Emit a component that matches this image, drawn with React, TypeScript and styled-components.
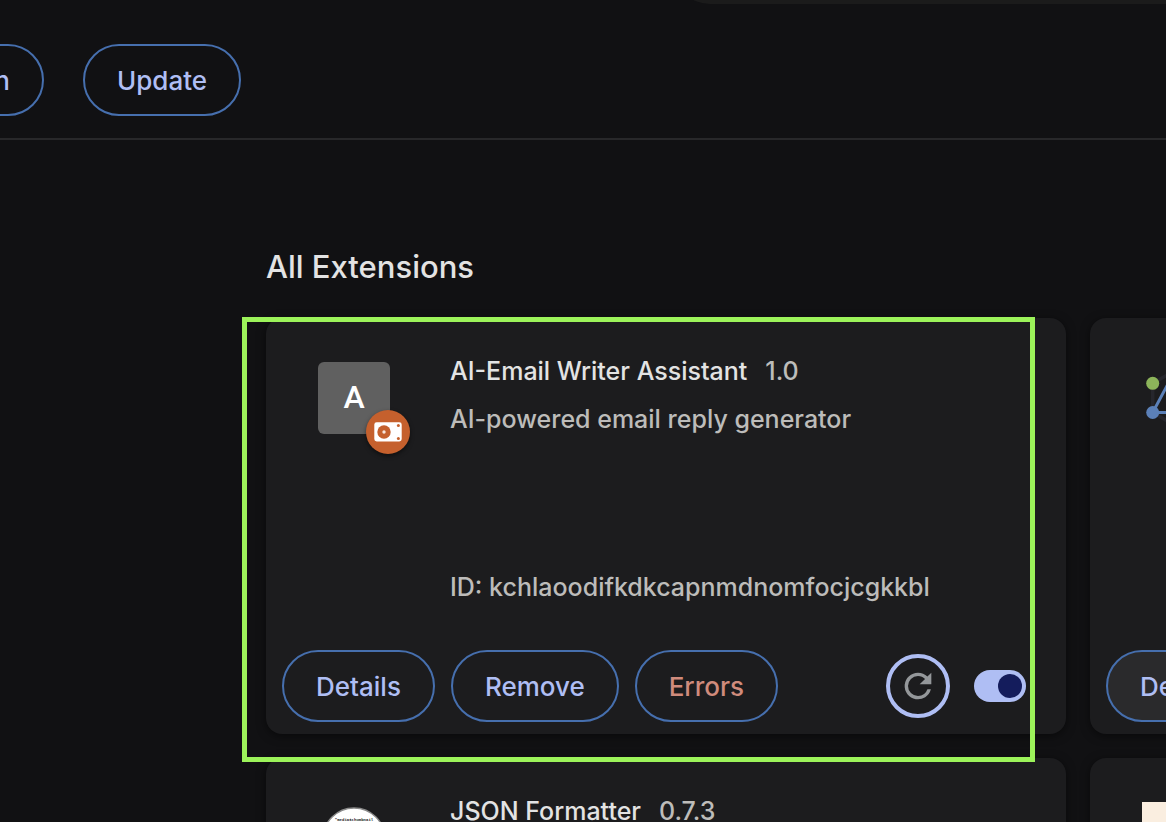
import React from "react";
import styled, { createGlobalStyle, css } from "styled-components";

const GlobalStyle = createGlobalStyle`
  * { box-sizing: border-box; }
  body {
    margin: 0;
    background: #111113;
    color: #e3e3e3;
    font-family: Inter, "Liberation Sans", sans-serif;
    font-size: 25px;
    font-weight: 500;
    line-height: 40px;
  }
`;

const Shell = styled.div`
  height: 100vh;
  overflow: hidden;
  display: flex;
  flex-direction: column;
`;

const Header = styled.header`
  flex: none;
  border-bottom: 2px solid #28282a;
`;

const SearchStrip = styled.div`
  height: 4px;
  overflow: hidden;
  display: flex;
  align-items: flex-end;
`;

const SearchField = styled.div`
  flex: 1 0 auto;
  height: 72px;
  margin: 0 -36px 0 674px;
  border-radius: 36px;
  background: #1b1b1b;
`;

const Toolbar = styled.div`
  display: flex;
  gap: 39px;
  padding: 40px 0 22px;
`;

const ClippedStart = styled.div`
  width: 44px;
  display: flex;
  justify-content: flex-end;
  overflow: hidden;
`;

const PillButton = styled.button<{ $tone?: "error"; $hovered?: boolean }>`
  flex: none;
  height: 72px;
  padding: 2px 32px 0;
  border: 2px solid #466fae;
  border-radius: 36px;
  background: ${(p) => (p.$hovered ? "#2a2a2c" : "transparent")};
  color: ${(p) => (p.$tone === "error" ? "#d08b7c" : "#afbef4")};
  font: inherit;
  font-size: 26px;
  white-space: nowrap;
`;

const Main = styled.main`
  padding: 106px 0 0 266px;
`;

const Heading = styled.h1`
  margin: 0 0 30px;
  font-size: 31px;
  font-weight: 450;
  line-height: 42px;
`;

const CardGrid = styled.div`
  display: grid;
  grid-template-columns: repeat(2, 800px);
  gap: 24px;
`;

const Card = styled.article`
  position: relative;
  height: 416px;
  display: flex;
  flex-direction: column;
  border-radius: 16px;
  background: #1c1c1e;
  box-shadow: 0 2px 10px rgba(0, 0, 0, 0.5);
`;

const CardBody = styled.div`
  flex: 1;
  display: flex;
  gap: 60px;
  padding: 33px 40px 0 52px;
`;

const IconBox = styled.div`
  position: relative;
  flex: none;
  width: 72px;
  height: 72px;
  margin-top: 11px;
  svg { display: block; }
`;

const Monogram = styled.div`
  height: 72px;
  border-radius: 6px;
  background: #606060;
  color: #fff;
  font: 500 32px/70px Roboto, sans-serif;
  text-align: center;
`;

const SourceBadge = styled.div`
  position: absolute;
  left: 48px;
  top: 48px;
  width: 44px;
  height: 44px;
  border-radius: 50%;
  background: #c5602d;
  box-shadow: 0 2px 4px rgba(0, 0, 0, 0.5);
`;

const Swatch = styled.div`
  height: 72px;
  background: #faeee0;
`;

const Info = styled.div`
  flex: 1;
  display: flex;
  flex-direction: column;
  gap: 8px;
  padding-bottom: 43px;
`;

const TitleRow = styled.div`
  display: flex;
  gap: 18px;
`;

const Title = styled.h2`
  margin: 0;
  font: inherit;
`;

const muted = css`
  color: #bdbcba;
`;

const Version = styled.span`${muted}`;

const Description = styled.p`
  ${muted}
  margin: 0;
`;

const ExtensionId = styled(Description)`
  margin-top: auto;
`;

const Actions = styled.div`
  display: flex;
  align-items: center;
  gap: 16px;
  padding: 0 40px 12px 16px;
`;

const Controls = styled.div`
  display: flex;
  align-items: center;
  gap: 24px;
  margin-left: auto;
`;

const ReloadButton = styled.button`
  width: 64px;
  height: 64px;
  display: grid;
  place-items: center;
  padding: 0;
  border: 4px solid #afbef4;
  border-radius: 50%;
  background: transparent;
  color: #94979a;
`;

const Toggle = styled.input`
  appearance: none;
  width: 52px;
  height: 32px;
  margin: 0;
  padding: 4px;
  display: flex;
  justify-content: flex-end;
  border-radius: 16px;
  background: #afbef4;
  &::before {
    content: "";
    width: 24px;
    height: 24px;
    border-radius: 50%;
    background: #141c5c;
  }
  &:not(:checked) { justify-content: flex-start; }
`;

const Highlight = styled.div`
  position: absolute;
  z-index: 1;
  inset: -1px 31px -28px -24px;
  border: 5px solid #9cf35a;
  pointer-events: none;
`;

const UnpackedIcon = () => (
  <svg width="44" height="44" viewBox="0 0 44 44" aria-hidden="true">
    <rect x="8.3" y="12.3" width="27.4" height="19.2" rx="2.4" fill="#fff" />
    <circle cx="18" cy="22" r="6.7" fill="#c5602d" />
    <circle cx="18" cy="22" r="1.7" fill="#f7e4da" />
    <circle cx="32.4" cy="15.4" r="1.5" fill="#c5602d" />
    <circle cx="32.4" cy="28.6" r="1.5" fill="#c5602d" />
  </svg>
);

const ReloadIcon = () => (
  <svg width="40" height="40" viewBox="0 0 24 24" fill="currentColor" aria-hidden="true">
    <path d="M17.65 6.35A7.958 7.958 0 0 0 12 4a8 8 0 1 0 7.73 10h-2.08A5.99 5.99 0 0 1 12 18a6 6 0 1 1 0-12c1.66 0 3.14.69 4.22 1.78L13 11h7V4z" />
  </svg>
);

const GraphIcon = () => (
  <svg width="72" height="72" viewBox="0 0 72 72" fill="none" aria-hidden="true">
    <path d="M10.7 21.3 36 7l25.3 14.3v29.2L36 65 10.7 50.5z" stroke="#26262c" strokeWidth="3.5" />
    <path d="M10.7 50.5 34 7l27.3 43.5z" stroke="#5b80b8" strokeWidth="3" />
    <circle cx="10.7" cy="21.3" r="6.5" fill="#8cb45a" />
    <circle cx="10.7" cy="50.5" r="6.5" fill="#5b80b8" />
  </svg>
);

const JsonIcon = () => (
  <svg width="72" height="72" viewBox="0 0 72 72" aria-hidden="true">
    <circle cx="36" cy="37" r="31" fill="#fff" stroke="#8a8a8a" strokeWidth="1.5" />
    <text x="36" y="19" textAnchor="middle" fontSize="4" fontWeight="700" fontFamily="Liberation Mono, monospace" fill="#222">
      "media$thumbnail
    </text>
  </svg>
);

export default function App() {
  return (
    <Shell>
      <GlobalStyle />
      <Header>
        <SearchStrip>
          <SearchField />
        </SearchStrip>
        <Toolbar>
          <ClippedStart>
            <PillButton>Pack extension</PillButton>
          </ClippedStart>
          <PillButton>Update</PillButton>
        </Toolbar>
      </Header>
      <Main>
        <Heading>All Extensions</Heading>
        <CardGrid>
          <Card>
            <CardBody>
              <IconBox>
                <Monogram>A</Monogram>
                <SourceBadge>
                  <UnpackedIcon />
                </SourceBadge>
              </IconBox>
              <Info>
                <TitleRow>
                  <Title>AI-Email Writer Assistant</Title>
                  <Version>1.0</Version>
                </TitleRow>
                <Description>AI-powered email reply generator</Description>
                <ExtensionId>ID: kchlaoodifkdkcapnmdnomfocjcgkkbl</ExtensionId>
              </Info>
            </CardBody>
            <Actions>
              <PillButton>Details</PillButton>
              <PillButton>Remove</PillButton>
              <PillButton $tone="error">Errors</PillButton>
              <Controls>
                <ReloadButton aria-label="Reload">
                  <ReloadIcon />
                </ReloadButton>
                <Toggle type="checkbox" role="switch" aria-label="Enabled" defaultChecked />
              </Controls>
            </Actions>
            <Highlight />
          </Card>
          <Card>
            <CardBody>
              <IconBox>
                <GraphIcon />
              </IconBox>
            </CardBody>
            <Actions>
              <PillButton $hovered>Details</PillButton>
            </Actions>
          </Card>
          <Card>
            <CardBody>
              <IconBox>
                <JsonIcon />
              </IconBox>
              <Info>
                <TitleRow>
                  <Title>JSON Formatter</Title>
                  <Version>0.7.3</Version>
                </TitleRow>
              </Info>
            </CardBody>
          </Card>
          <Card>
            <CardBody>
              <IconBox>
                <Swatch />
              </IconBox>
            </CardBody>
          </Card>
        </CardGrid>
      </Main>
    </Shell>
  );
}
